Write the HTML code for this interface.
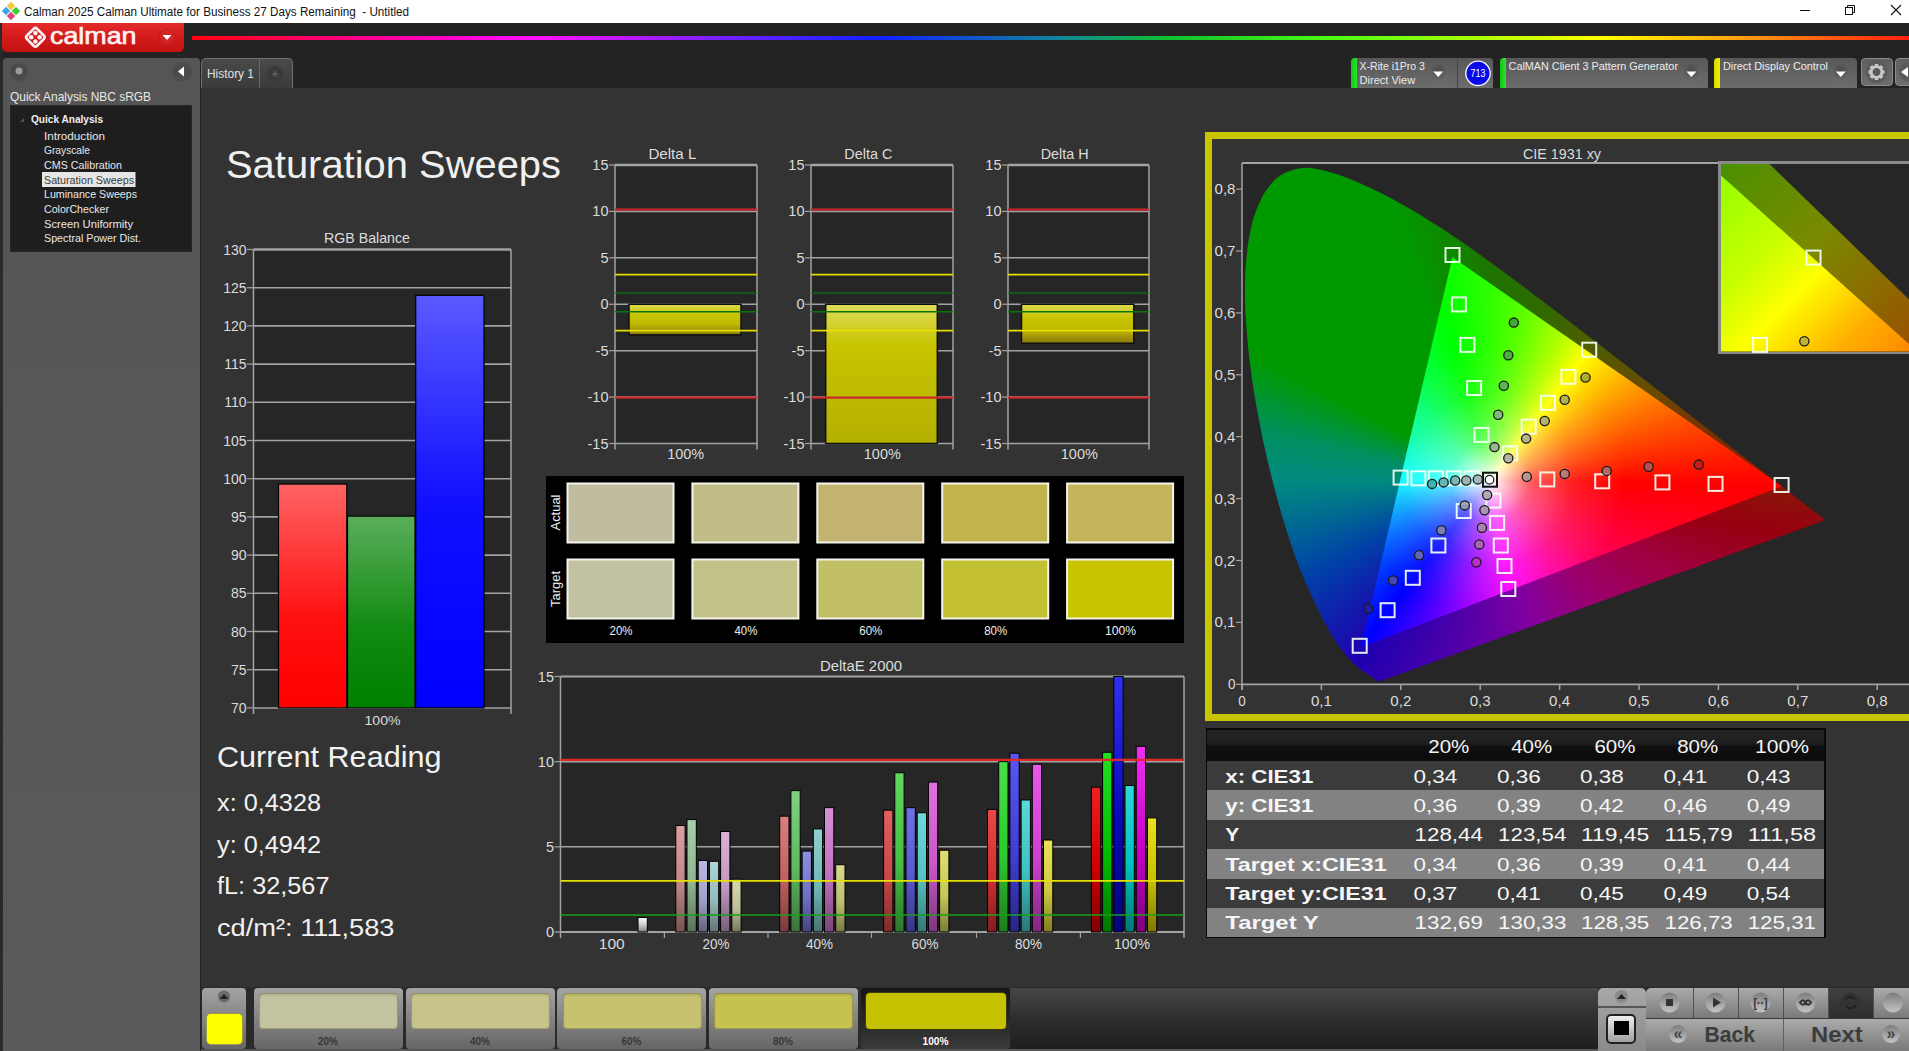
<!DOCTYPE html>
<html><head><meta charset="utf-8"><title>Calman</title>
<style>
html,body{margin:0;padding:0;width:1909px;height:1051px;overflow:hidden;background:#232323;font-family:"Liberation Sans", sans-serif;}
svg text{font-family:"Liberation Sans", sans-serif;}
</style></head><body>
<div style="position:absolute;left:0px;top:0px;width:1909px;height:23px;background:#ffffff;"></div><div style="position:absolute;left:0px;top:23px;width:3px;height:1028px;background:#2a2a2a;"></div><div style="position:absolute;left:2px;top:23px;width:182px;height:29px;background:linear-gradient(#e42b2b,#d01818 60%,#c41212);border-radius:0 0 5px 5px;"></div><div style="position:absolute;left:192px;top:36px;width:1717px;height:4px;background:linear-gradient(90deg,#ff0010 0%,#ff00c0 14%,#ff10ff 20%,#8020ff 30%,#1020ff 40%,#1080a0 50%,#10c030 57%,#50ff10 67%,#ffff00 82%,#ffa010 90%,#ff2010 100%);"></div><div style="position:absolute;left:3px;top:58px;width:197px;height:993px;background:linear-gradient(#555555,#5a5a5a);border-radius:4px 4px 0 0;"></div><div style="position:absolute;left:10px;top:105px;width:182px;height:147px;background:#1e1e1e;box-shadow:inset 0 0 0 1px #262626;"></div><div style="position:absolute;left:201px;top:58px;width:92px;height:30px;background:linear-gradient(#4a4a4a,#3a3a3a);border:1px solid #707070;border-bottom:none;border-radius:5px 5px 0 0;box-sizing:border-box;"></div><div style="position:absolute;left:259px;top:58px;width:1px;height:30px;background:#6a6a6a;"></div><div style="position:absolute;left:201px;top:88px;width:1708px;height:899px;background:#333333;"></div><div style="position:absolute;left:201px;top:987px;width:1708px;height:64px;background:#2b2b2b;"></div><svg width="1909" height="1051" viewBox="0 0 1909 1051" style="position:absolute;left:0;top:0"><defs><linearGradient id="gff0000" x1="0" y1="0" x2="0" y2="1"><stop offset="0" stop-color="#ff6464"/><stop offset="0.6" stop-color="#ff1010"/><stop offset="1" stop-color="#ff0000"/></linearGradient><linearGradient id="g008000" x1="0" y1="0" x2="0" y2="1"><stop offset="0" stop-color="#5aae5a"/><stop offset="0.6" stop-color="#108a10"/><stop offset="1" stop-color="#008000"/></linearGradient><linearGradient id="g0000ff" x1="0" y1="0" x2="0" y2="1"><stop offset="0" stop-color="#5a5aff"/><stop offset="0.5" stop-color="#1010ff"/><stop offset="1" stop-color="#0000ff"/></linearGradient><linearGradient id="gyel" x1="0" y1="0" x2="0" y2="1"><stop offset="0" stop-color="#dada50"/><stop offset="0.35" stop-color="#c8c400"/><stop offset="0.65" stop-color="#c0b800"/><stop offset="1" stop-color="#8a7810"/></linearGradient><linearGradient id="gyel2" x1="0" y1="0" x2="0" y2="1"><stop offset="0" stop-color="#dcdc5a"/><stop offset="0.3" stop-color="#c8c400"/><stop offset="1" stop-color="#b4b000"/></linearGradient><linearGradient id="eb1" x1="0" y1="0" x2="0" y2="1"><stop offset="0" stop-color="#ffffff"/><stop offset="0.55" stop-color="#c8c8c8"/><stop offset="1" stop-color="#7c7c7c"/></linearGradient><linearGradient id="eb2" x1="0" y1="0" x2="0" y2="1"><stop offset="0" stop-color="#d8a0a0"/><stop offset="0.55" stop-color="#c08888"/><stop offset="1" stop-color="#775454"/></linearGradient><linearGradient id="eb3" x1="0" y1="0" x2="0" y2="1"><stop offset="0" stop-color="#a8d0a8"/><stop offset="0.55" stop-color="#90b890"/><stop offset="1" stop-color="#597259"/></linearGradient><linearGradient id="eb4" x1="0" y1="0" x2="0" y2="1"><stop offset="0" stop-color="#b8b8e0"/><stop offset="0.55" stop-color="#a0a0c8"/><stop offset="1" stop-color="#63637c"/></linearGradient><linearGradient id="eb5" x1="0" y1="0" x2="0" y2="1"><stop offset="0" stop-color="#b0d4d4"/><stop offset="0.55" stop-color="#98bcbc"/><stop offset="1" stop-color="#5e7474"/></linearGradient><linearGradient id="eb6" x1="0" y1="0" x2="0" y2="1"><stop offset="0" stop-color="#d8b0d8"/><stop offset="0.55" stop-color="#c098c0"/><stop offset="1" stop-color="#775e77"/></linearGradient><linearGradient id="eb7" x1="0" y1="0" x2="0" y2="1"><stop offset="0" stop-color="#d8d8b0"/><stop offset="0.55" stop-color="#c0c098"/><stop offset="1" stop-color="#77775e"/></linearGradient><linearGradient id="eb8" x1="0" y1="0" x2="0" y2="1"><stop offset="0" stop-color="#d88080"/><stop offset="0.55" stop-color="#c06060"/><stop offset="1" stop-color="#773b3b"/></linearGradient><linearGradient id="eb9" x1="0" y1="0" x2="0" y2="1"><stop offset="0" stop-color="#80d080"/><stop offset="0.55" stop-color="#60b860"/><stop offset="1" stop-color="#3b723b"/></linearGradient><linearGradient id="eb10" x1="0" y1="0" x2="0" y2="1"><stop offset="0" stop-color="#9090e0"/><stop offset="0.55" stop-color="#7070c8"/><stop offset="1" stop-color="#45457c"/></linearGradient><linearGradient id="eb11" x1="0" y1="0" x2="0" y2="1"><stop offset="0" stop-color="#90d0d0"/><stop offset="0.55" stop-color="#70b8b8"/><stop offset="1" stop-color="#457272"/></linearGradient><linearGradient id="eb12" x1="0" y1="0" x2="0" y2="1"><stop offset="0" stop-color="#d890d8"/><stop offset="0.55" stop-color="#c070c0"/><stop offset="1" stop-color="#774577"/></linearGradient><linearGradient id="eb13" x1="0" y1="0" x2="0" y2="1"><stop offset="0" stop-color="#d8d890"/><stop offset="0.55" stop-color="#c0c070"/><stop offset="1" stop-color="#777745"/></linearGradient><linearGradient id="eb14" x1="0" y1="0" x2="0" y2="1"><stop offset="0" stop-color="#e06060"/><stop offset="0.55" stop-color="#c84848"/><stop offset="1" stop-color="#7c2c2c"/></linearGradient><linearGradient id="eb15" x1="0" y1="0" x2="0" y2="1"><stop offset="0" stop-color="#60d860"/><stop offset="0.55" stop-color="#48c048"/><stop offset="1" stop-color="#2c772c"/></linearGradient><linearGradient id="eb16" x1="0" y1="0" x2="0" y2="1"><stop offset="0" stop-color="#7070e8"/><stop offset="0.55" stop-color="#5858d0"/><stop offset="1" stop-color="#363680"/></linearGradient><linearGradient id="eb17" x1="0" y1="0" x2="0" y2="1"><stop offset="0" stop-color="#70d8d8"/><stop offset="0.55" stop-color="#58c0c0"/><stop offset="1" stop-color="#367777"/></linearGradient><linearGradient id="eb18" x1="0" y1="0" x2="0" y2="1"><stop offset="0" stop-color="#e070e0"/><stop offset="0.55" stop-color="#c858c8"/><stop offset="1" stop-color="#7c367c"/></linearGradient><linearGradient id="eb19" x1="0" y1="0" x2="0" y2="1"><stop offset="0" stop-color="#e0e070"/><stop offset="0.55" stop-color="#c8c858"/><stop offset="1" stop-color="#7c7c36"/></linearGradient><linearGradient id="eb20" x1="0" y1="0" x2="0" y2="1"><stop offset="0" stop-color="#e84848"/><stop offset="0.55" stop-color="#d03030"/><stop offset="1" stop-color="#801d1d"/></linearGradient><linearGradient id="eb21" x1="0" y1="0" x2="0" y2="1"><stop offset="0" stop-color="#48e048"/><stop offset="0.55" stop-color="#30c830"/><stop offset="1" stop-color="#1d7c1d"/></linearGradient><linearGradient id="eb22" x1="0" y1="0" x2="0" y2="1"><stop offset="0" stop-color="#5858f0"/><stop offset="0.55" stop-color="#4040d8"/><stop offset="1" stop-color="#272785"/></linearGradient><linearGradient id="eb23" x1="0" y1="0" x2="0" y2="1"><stop offset="0" stop-color="#58d8d8"/><stop offset="0.55" stop-color="#40c0c0"/><stop offset="1" stop-color="#277777"/></linearGradient><linearGradient id="eb24" x1="0" y1="0" x2="0" y2="1"><stop offset="0" stop-color="#e858e8"/><stop offset="0.55" stop-color="#d040d0"/><stop offset="1" stop-color="#802780"/></linearGradient><linearGradient id="eb25" x1="0" y1="0" x2="0" y2="1"><stop offset="0" stop-color="#e8e058"/><stop offset="0.55" stop-color="#d0c840"/><stop offset="1" stop-color="#807c27"/></linearGradient><linearGradient id="eb26" x1="0" y1="0" x2="0" y2="1"><stop offset="0" stop-color="#f02020"/><stop offset="0.55" stop-color="#d00000"/><stop offset="1" stop-color="#800000"/></linearGradient><linearGradient id="eb27" x1="0" y1="0" x2="0" y2="1"><stop offset="0" stop-color="#20e020"/><stop offset="0.55" stop-color="#00c000"/><stop offset="1" stop-color="#007700"/></linearGradient><linearGradient id="eb28" x1="0" y1="0" x2="0" y2="1"><stop offset="0" stop-color="#3030f0"/><stop offset="0.55" stop-color="#0808c0"/><stop offset="1" stop-color="#040477"/></linearGradient><linearGradient id="eb29" x1="0" y1="0" x2="0" y2="1"><stop offset="0" stop-color="#30d8d8"/><stop offset="0.55" stop-color="#00c0c0"/><stop offset="1" stop-color="#007777"/></linearGradient><linearGradient id="eb30" x1="0" y1="0" x2="0" y2="1"><stop offset="0" stop-color="#f030f0"/><stop offset="0.55" stop-color="#c800c8"/><stop offset="1" stop-color="#7c007c"/></linearGradient><linearGradient id="eb31" x1="0" y1="0" x2="0" y2="1"><stop offset="0" stop-color="#e8e020"/><stop offset="0.55" stop-color="#c8c000"/><stop offset="1" stop-color="#7c7700"/></linearGradient><radialGradient id="dd" cx="0.5" cy="0.3" r="0.6"><stop offset="0" stop-color="#4c4c4c"/><stop offset="1" stop-color="#6a6a6a"/></radialGradient><linearGradient id="nbc" x1="0" y1="0" x2="0" y2="1"><stop offset="0" stop-color="#7c7c7c"/><stop offset="1" stop-color="#c4c4c4"/></linearGradient></defs><g transform="translate(11,11) rotate(45)"><rect x="-6.5" y="-6.5" width="6" height="6" fill="#f5c93a"/><rect x="0.5" y="-6.5" width="6" height="6" fill="#3ccf3c"/><rect x="0.5" y="0.5" width="6" height="6" fill="#e8407a"/><rect x="-6.5" y="0.5" width="6" height="6" fill="#3aa8e8"/></g><text x="24" y="16" font-size="12" fill="#111" text-anchor="start" textLength="385" lengthAdjust="spacingAndGlyphs" xml:space="preserve">Calman 2025 Calman Ultimate for Business 27 Days Remaining  - Untitled</text><line x1="1800" y1="10.5" x2="1810" y2="10.5" stroke="#111" stroke-width="1"/><rect x="1845.5" y="7.5" width="7" height="7" fill="none" stroke="#111"/><path d="M1847.5 7.5V5.5h7v7h-2" fill="none" stroke="#111"/><path d="M1891 5L1901 15M1901 5L1891 15" stroke="#111" stroke-width="1.1"/><g transform="translate(35.4,37.3) rotate(45)" fill="none" stroke="#fff4f4" stroke-width="2.6"><rect x="-7.2" y="-7.2" width="14.4" height="14.4" rx="2.5"/></g><g fill="#fff4f4"><circle cx="35.4" cy="33.1" r="2.3"/><circle cx="31.2" cy="37.3" r="2.3"/><circle cx="39.6" cy="37.3" r="2.3"/><circle cx="35.4" cy="41.5" r="2.3"/></g><text x="50" y="44" font-size="24.5" fill="#fff0f0" text-anchor="start" textLength="86.5" lengthAdjust="spacingAndGlyphs" stroke="#fff0f0" stroke-width="0.7">calman</text><circle cx="167" cy="37.5" r="9" fill="#c81c1c"/><circle cx="167" cy="36.5" r="7" fill="#d42424"/><path d="M162.5 35h9l-4.5 5z" fill="#fff"/><circle cx="19" cy="72" r="9" fill="#4a4a4a"/><circle cx="19" cy="71" r="3.5" fill="#9a9a9a"/><circle cx="182" cy="72" r="10" fill="#4c4c4c"/><path d="M178 71.5l6-5v10z" fill="#fff"/><text x="10" y="101" font-size="13" fill="#e8e8e8" text-anchor="start" textLength="141" lengthAdjust="spacingAndGlyphs">Quick Analysis NBC sRGB</text><path d="M20 122l4-4v4z" fill="#555"/><text x="31" y="123" font-size="11" fill="#f0f0f0" text-anchor="start" font-weight="bold" textLength="72" lengthAdjust="spacingAndGlyphs">Quick Analysis</text><text x="44" y="139.5" font-size="11" fill="#e8e8e8" text-anchor="start" textLength="61" lengthAdjust="spacingAndGlyphs">Introduction</text><text x="44" y="154.2" font-size="11" fill="#e8e8e8" text-anchor="start" textLength="46" lengthAdjust="spacingAndGlyphs">Grayscale</text><text x="44" y="168.9" font-size="11" fill="#e8e8e8" text-anchor="start" textLength="78" lengthAdjust="spacingAndGlyphs">CMS Calibration</text><rect x="42" y="172" width="93.5" height="15" fill="#e6e6e6"/><text x="44" y="183.6" font-size="11" fill="#3a3a3a" text-anchor="start" textLength="90" lengthAdjust="spacingAndGlyphs">Saturation Sweeps</text><text x="44" y="198.3" font-size="11" fill="#e8e8e8" text-anchor="start" textLength="93" lengthAdjust="spacingAndGlyphs">Luminance Sweeps</text><text x="44" y="213.0" font-size="11" fill="#e8e8e8" text-anchor="start" textLength="65" lengthAdjust="spacingAndGlyphs">ColorChecker</text><text x="44" y="227.7" font-size="11" fill="#e8e8e8" text-anchor="start" textLength="89" lengthAdjust="spacingAndGlyphs">Screen Uniformity</text><text x="44" y="242.39999999999998" font-size="11" fill="#e8e8e8" text-anchor="start" textLength="97" lengthAdjust="spacingAndGlyphs">Spectral Power Dist.</text><text x="207" y="78" font-size="12" fill="#e0e0e0" text-anchor="start" textLength="47" lengthAdjust="spacingAndGlyphs">History 1</text><circle cx="275" cy="74" r="8" fill="#3a3a3a"/><path d="M275 71v6M272 74h6" stroke="#6a6a6a" stroke-width="1"/><text x="226" y="177.7" font-size="38" fill="#f0f0f0" text-anchor="start" textLength="335" lengthAdjust="spacingAndGlyphs">Saturation Sweeps</text><rect x="253.5" y="249.5" width="257.5" height="458.4" fill="#262626"/><line x1="247" y1="249.5" x2="253.5" y2="249.5" stroke="#a3a3a3" stroke-width="1.2"/><text x="246.5" y="254.5" font-size="14" fill="#dcdcdc" text-anchor="end">130</text><line x1="253.5" y1="287.7" x2="511" y2="287.7" stroke="#a3a3a3" stroke-width="1.6"/><line x1="247" y1="287.7" x2="253.5" y2="287.7" stroke="#a3a3a3" stroke-width="1.2"/><text x="246.5" y="292.7" font-size="14" fill="#dcdcdc" text-anchor="end">125</text><line x1="253.5" y1="325.9" x2="511" y2="325.9" stroke="#a3a3a3" stroke-width="1.6"/><line x1="247" y1="325.9" x2="253.5" y2="325.9" stroke="#a3a3a3" stroke-width="1.2"/><text x="246.5" y="330.9" font-size="14" fill="#dcdcdc" text-anchor="end">120</text><line x1="253.5" y1="364.1" x2="511" y2="364.1" stroke="#a3a3a3" stroke-width="1.6"/><line x1="247" y1="364.1" x2="253.5" y2="364.1" stroke="#a3a3a3" stroke-width="1.2"/><text x="246.5" y="369.1" font-size="14" fill="#dcdcdc" text-anchor="end">115</text><line x1="253.5" y1="402.29999999999995" x2="511" y2="402.29999999999995" stroke="#a3a3a3" stroke-width="1.6"/><line x1="247" y1="402.29999999999995" x2="253.5" y2="402.29999999999995" stroke="#a3a3a3" stroke-width="1.2"/><text x="246.5" y="407.29999999999995" font-size="14" fill="#dcdcdc" text-anchor="end">110</text><line x1="253.5" y1="440.5" x2="511" y2="440.5" stroke="#a3a3a3" stroke-width="1.6"/><line x1="247" y1="440.5" x2="253.5" y2="440.5" stroke="#a3a3a3" stroke-width="1.2"/><text x="246.5" y="445.5" font-size="14" fill="#dcdcdc" text-anchor="end">105</text><line x1="253.5" y1="478.7" x2="511" y2="478.7" stroke="#a3a3a3" stroke-width="1.6"/><line x1="247" y1="478.7" x2="253.5" y2="478.7" stroke="#a3a3a3" stroke-width="1.2"/><text x="246.5" y="483.7" font-size="14" fill="#dcdcdc" text-anchor="end">100</text><line x1="253.5" y1="516.9" x2="511" y2="516.9" stroke="#a3a3a3" stroke-width="1.6"/><line x1="247" y1="516.9" x2="253.5" y2="516.9" stroke="#a3a3a3" stroke-width="1.2"/><text x="246.5" y="521.9" font-size="14" fill="#dcdcdc" text-anchor="end">95</text><line x1="253.5" y1="555.0999999999999" x2="511" y2="555.0999999999999" stroke="#a3a3a3" stroke-width="1.6"/><line x1="247" y1="555.0999999999999" x2="253.5" y2="555.0999999999999" stroke="#a3a3a3" stroke-width="1.2"/><text x="246.5" y="560.0999999999999" font-size="14" fill="#dcdcdc" text-anchor="end">90</text><line x1="253.5" y1="593.3" x2="511" y2="593.3" stroke="#a3a3a3" stroke-width="1.6"/><line x1="247" y1="593.3" x2="253.5" y2="593.3" stroke="#a3a3a3" stroke-width="1.2"/><text x="246.5" y="598.3" font-size="14" fill="#dcdcdc" text-anchor="end">85</text><line x1="253.5" y1="631.5" x2="511" y2="631.5" stroke="#a3a3a3" stroke-width="1.6"/><line x1="247" y1="631.5" x2="253.5" y2="631.5" stroke="#a3a3a3" stroke-width="1.2"/><text x="246.5" y="636.5" font-size="14" fill="#dcdcdc" text-anchor="end">80</text><line x1="253.5" y1="669.6999999999999" x2="511" y2="669.6999999999999" stroke="#a3a3a3" stroke-width="1.6"/><line x1="247" y1="669.6999999999999" x2="253.5" y2="669.6999999999999" stroke="#a3a3a3" stroke-width="1.2"/><text x="246.5" y="674.6999999999999" font-size="14" fill="#dcdcdc" text-anchor="end">75</text><line x1="247" y1="707.9" x2="253.5" y2="707.9" stroke="#a3a3a3" stroke-width="1.2"/><text x="246.5" y="712.9" font-size="14" fill="#dcdcdc" text-anchor="end">70</text><line x1="253.5" y1="249.5" x2="511" y2="249.5" stroke="#a3a3a3" stroke-width="2.5"/><line x1="253.5" y1="249.5" x2="253.5" y2="714" stroke="#a3a3a3" stroke-width="1.5"/><line x1="511" y1="249.5" x2="511" y2="714" stroke="#a3a3a3" stroke-width="1.5"/><line x1="253.5" y1="707.9" x2="511" y2="707.9" stroke="#a3a3a3" stroke-width="1.5"/><text x="367" y="243" font-size="14" fill="#dcdcdc" text-anchor="middle" textLength="86" lengthAdjust="spacingAndGlyphs">RGB Balance</text><text x="382.5" y="725" font-size="13.5" fill="#dcdcdc" text-anchor="middle" textLength="36" lengthAdjust="spacingAndGlyphs">100%</text><rect x="278.5" y="484.048" width="68.30000000000001" height="223.85199999999998" fill="url(#gff0000)" stroke="#000" stroke-width="1.2"/><rect x="347.5" y="516.136" width="67.5" height="191.764" fill="url(#g008000)" stroke="#000" stroke-width="1.2"/><rect x="415.7" y="295.34" width="68.30000000000001" height="412.56" fill="url(#g0000ff)" stroke="#000" stroke-width="1.2"/><text x="217" y="767.3" font-size="28.6" fill="#f2f2f2" text-anchor="start" textLength="224.5" lengthAdjust="spacingAndGlyphs">Current Reading</text><text x="217" y="810.6" font-size="23.3" fill="#f2f2f2" text-anchor="start" textLength="104" lengthAdjust="spacingAndGlyphs">x: 0,4328</text><text x="217" y="852.5" font-size="23.3" fill="#f2f2f2" text-anchor="start" textLength="104" lengthAdjust="spacingAndGlyphs">y: 0,4942</text><text x="217" y="894.4" font-size="23.3" fill="#f2f2f2" text-anchor="start" textLength="112.5" lengthAdjust="spacingAndGlyphs">fL: 32,567</text><text x="217" y="936.2" font-size="23.3" fill="#f2f2f2" text-anchor="start" textLength="177.5" lengthAdjust="spacingAndGlyphs">cd/m²: 111,583</text><rect x="615" y="165" width="142" height="278.5" fill="#262626"/><line x1="609" y1="165.0" x2="615" y2="165.0" stroke="#a3a3a3" stroke-width="1.2"/><text x="608.5" y="170.0" font-size="14.5" fill="#dcdcdc" text-anchor="end">15</text><line x1="615" y1="211.41666666666666" x2="757" y2="211.41666666666666" stroke="#a3a3a3" stroke-width="1.5"/><line x1="609" y1="211.41666666666666" x2="615" y2="211.41666666666666" stroke="#a3a3a3" stroke-width="1.2"/><text x="608.5" y="216.41666666666666" font-size="14.5" fill="#dcdcdc" text-anchor="end">10</text><line x1="615" y1="257.8333333333333" x2="757" y2="257.8333333333333" stroke="#a3a3a3" stroke-width="1.5"/><line x1="609" y1="257.8333333333333" x2="615" y2="257.8333333333333" stroke="#a3a3a3" stroke-width="1.2"/><text x="608.5" y="262.8333333333333" font-size="14.5" fill="#dcdcdc" text-anchor="end">5</text><line x1="615" y1="304.25" x2="757" y2="304.25" stroke="#a3a3a3" stroke-width="1.5"/><line x1="609" y1="304.25" x2="615" y2="304.25" stroke="#a3a3a3" stroke-width="1.2"/><text x="608.5" y="309.25" font-size="14.5" fill="#dcdcdc" text-anchor="end">0</text><line x1="615" y1="350.66666666666663" x2="757" y2="350.66666666666663" stroke="#a3a3a3" stroke-width="1.5"/><line x1="609" y1="350.66666666666663" x2="615" y2="350.66666666666663" stroke="#a3a3a3" stroke-width="1.2"/><text x="608.5" y="355.66666666666663" font-size="14.5" fill="#dcdcdc" text-anchor="end">-5</text><line x1="615" y1="397.0833333333333" x2="757" y2="397.0833333333333" stroke="#a3a3a3" stroke-width="1.5"/><line x1="609" y1="397.0833333333333" x2="615" y2="397.0833333333333" stroke="#a3a3a3" stroke-width="1.2"/><text x="608.5" y="402.0833333333333" font-size="14.5" fill="#dcdcdc" text-anchor="end">-10</text><line x1="609" y1="443.5" x2="615" y2="443.5" stroke="#a3a3a3" stroke-width="1.2"/><text x="608.5" y="448.5" font-size="14.5" fill="#dcdcdc" text-anchor="end">-15</text><line x1="615" y1="165" x2="757" y2="165" stroke="#a3a3a3" stroke-width="2.5"/><line x1="615" y1="165" x2="615" y2="449.5" stroke="#a3a3a3" stroke-width="1.5"/><line x1="757" y1="165" x2="757" y2="449.5" stroke="#a3a3a3" stroke-width="1.5"/><line x1="615" y1="443.5" x2="757" y2="443.5" stroke="#a3a3a3" stroke-width="1.5"/><text x="672.4" y="159" font-size="14.5" fill="#dcdcdc" text-anchor="middle" textLength="48" lengthAdjust="spacingAndGlyphs">Delta L</text><text x="685.7" y="458.5" font-size="14" fill="#dcdcdc" text-anchor="middle" textLength="37" lengthAdjust="spacingAndGlyphs">100%</text><rect x="629" y="304.25" width="112" height="30.63499999999999" fill="url(#gyel)" stroke="#101010" stroke-width="1.5"/><line x1="615" y1="209.56" x2="757" y2="209.56" stroke="#c82828" stroke-width="2.2"/><line x1="615" y1="397.5475" x2="757" y2="397.5475" stroke="#c82828" stroke-width="2.2"/><line x1="615" y1="274.54333333333335" x2="757" y2="274.54333333333335" stroke="#e6e000" stroke-width="1.7"/><line x1="615" y1="330.7075" x2="757" y2="330.7075" stroke="#e6e000" stroke-width="1.7"/><line x1="615" y1="293.11" x2="757" y2="293.11" stroke="#0c740c" stroke-width="1.4"/><line x1="615" y1="311.6766666666667" x2="757" y2="311.6766666666667" stroke="#0c740c" stroke-width="1.4"/><rect x="811" y="165" width="142" height="278.5" fill="#262626"/><line x1="805" y1="165.0" x2="811" y2="165.0" stroke="#a3a3a3" stroke-width="1.2"/><text x="804.5" y="170.0" font-size="14.5" fill="#dcdcdc" text-anchor="end">15</text><line x1="811" y1="211.41666666666666" x2="953" y2="211.41666666666666" stroke="#a3a3a3" stroke-width="1.5"/><line x1="805" y1="211.41666666666666" x2="811" y2="211.41666666666666" stroke="#a3a3a3" stroke-width="1.2"/><text x="804.5" y="216.41666666666666" font-size="14.5" fill="#dcdcdc" text-anchor="end">10</text><line x1="811" y1="257.8333333333333" x2="953" y2="257.8333333333333" stroke="#a3a3a3" stroke-width="1.5"/><line x1="805" y1="257.8333333333333" x2="811" y2="257.8333333333333" stroke="#a3a3a3" stroke-width="1.2"/><text x="804.5" y="262.8333333333333" font-size="14.5" fill="#dcdcdc" text-anchor="end">5</text><line x1="811" y1="304.25" x2="953" y2="304.25" stroke="#a3a3a3" stroke-width="1.5"/><line x1="805" y1="304.25" x2="811" y2="304.25" stroke="#a3a3a3" stroke-width="1.2"/><text x="804.5" y="309.25" font-size="14.5" fill="#dcdcdc" text-anchor="end">0</text><line x1="811" y1="350.66666666666663" x2="953" y2="350.66666666666663" stroke="#a3a3a3" stroke-width="1.5"/><line x1="805" y1="350.66666666666663" x2="811" y2="350.66666666666663" stroke="#a3a3a3" stroke-width="1.2"/><text x="804.5" y="355.66666666666663" font-size="14.5" fill="#dcdcdc" text-anchor="end">-5</text><line x1="811" y1="397.0833333333333" x2="953" y2="397.0833333333333" stroke="#a3a3a3" stroke-width="1.5"/><line x1="805" y1="397.0833333333333" x2="811" y2="397.0833333333333" stroke="#a3a3a3" stroke-width="1.2"/><text x="804.5" y="402.0833333333333" font-size="14.5" fill="#dcdcdc" text-anchor="end">-10</text><line x1="805" y1="443.5" x2="811" y2="443.5" stroke="#a3a3a3" stroke-width="1.2"/><text x="804.5" y="448.5" font-size="14.5" fill="#dcdcdc" text-anchor="end">-15</text><line x1="811" y1="165" x2="953" y2="165" stroke="#a3a3a3" stroke-width="2.5"/><line x1="811" y1="165" x2="811" y2="449.5" stroke="#a3a3a3" stroke-width="1.5"/><line x1="953" y1="165" x2="953" y2="449.5" stroke="#a3a3a3" stroke-width="1.5"/><line x1="811" y1="443.5" x2="953" y2="443.5" stroke="#a3a3a3" stroke-width="1.5"/><text x="868.3" y="159" font-size="14.5" fill="#dcdcdc" text-anchor="middle" textLength="48" lengthAdjust="spacingAndGlyphs">Delta C</text><text x="882.3" y="458.5" font-size="14" fill="#dcdcdc" text-anchor="middle" textLength="37" lengthAdjust="spacingAndGlyphs">100%</text><rect x="825.7" y="304.25" width="111.59999999999991" height="139.25" fill="url(#gyel2)" stroke="#101010" stroke-width="1.5"/><line x1="811" y1="209.56" x2="953" y2="209.56" stroke="#c82828" stroke-width="2.2"/><line x1="811" y1="397.5475" x2="953" y2="397.5475" stroke="#c82828" stroke-width="2.2"/><line x1="811" y1="274.54333333333335" x2="953" y2="274.54333333333335" stroke="#e6e000" stroke-width="1.7"/><line x1="811" y1="330.7075" x2="953" y2="330.7075" stroke="#e6e000" stroke-width="1.7"/><line x1="811" y1="293.11" x2="953" y2="293.11" stroke="#0c740c" stroke-width="1.4"/><line x1="811" y1="311.6766666666667" x2="953" y2="311.6766666666667" stroke="#0c740c" stroke-width="1.4"/><rect x="1008" y="165" width="141" height="278.5" fill="#262626"/><line x1="1002" y1="165.0" x2="1008" y2="165.0" stroke="#a3a3a3" stroke-width="1.2"/><text x="1001.5" y="170.0" font-size="14.5" fill="#dcdcdc" text-anchor="end">15</text><line x1="1008" y1="211.41666666666666" x2="1149" y2="211.41666666666666" stroke="#a3a3a3" stroke-width="1.5"/><line x1="1002" y1="211.41666666666666" x2="1008" y2="211.41666666666666" stroke="#a3a3a3" stroke-width="1.2"/><text x="1001.5" y="216.41666666666666" font-size="14.5" fill="#dcdcdc" text-anchor="end">10</text><line x1="1008" y1="257.8333333333333" x2="1149" y2="257.8333333333333" stroke="#a3a3a3" stroke-width="1.5"/><line x1="1002" y1="257.8333333333333" x2="1008" y2="257.8333333333333" stroke="#a3a3a3" stroke-width="1.2"/><text x="1001.5" y="262.8333333333333" font-size="14.5" fill="#dcdcdc" text-anchor="end">5</text><line x1="1008" y1="304.25" x2="1149" y2="304.25" stroke="#a3a3a3" stroke-width="1.5"/><line x1="1002" y1="304.25" x2="1008" y2="304.25" stroke="#a3a3a3" stroke-width="1.2"/><text x="1001.5" y="309.25" font-size="14.5" fill="#dcdcdc" text-anchor="end">0</text><line x1="1008" y1="350.66666666666663" x2="1149" y2="350.66666666666663" stroke="#a3a3a3" stroke-width="1.5"/><line x1="1002" y1="350.66666666666663" x2="1008" y2="350.66666666666663" stroke="#a3a3a3" stroke-width="1.2"/><text x="1001.5" y="355.66666666666663" font-size="14.5" fill="#dcdcdc" text-anchor="end">-5</text><line x1="1008" y1="397.0833333333333" x2="1149" y2="397.0833333333333" stroke="#a3a3a3" stroke-width="1.5"/><line x1="1002" y1="397.0833333333333" x2="1008" y2="397.0833333333333" stroke="#a3a3a3" stroke-width="1.2"/><text x="1001.5" y="402.0833333333333" font-size="14.5" fill="#dcdcdc" text-anchor="end">-10</text><line x1="1002" y1="443.5" x2="1008" y2="443.5" stroke="#a3a3a3" stroke-width="1.2"/><text x="1001.5" y="448.5" font-size="14.5" fill="#dcdcdc" text-anchor="end">-15</text><line x1="1008" y1="165" x2="1149" y2="165" stroke="#a3a3a3" stroke-width="2.5"/><line x1="1008" y1="165" x2="1008" y2="449.5" stroke="#a3a3a3" stroke-width="1.5"/><line x1="1149" y1="165" x2="1149" y2="449.5" stroke="#a3a3a3" stroke-width="1.5"/><line x1="1008" y1="443.5" x2="1149" y2="443.5" stroke="#a3a3a3" stroke-width="1.5"/><text x="1064.7" y="159" font-size="14.5" fill="#dcdcdc" text-anchor="middle" textLength="48" lengthAdjust="spacingAndGlyphs">Delta H</text><text x="1079.3" y="458.5" font-size="14" fill="#dcdcdc" text-anchor="middle" textLength="37" lengthAdjust="spacingAndGlyphs">100%</text><rect x="1021.5" y="304.25" width="112.29999999999995" height="38.99000000000001" fill="url(#gyel)" stroke="#101010" stroke-width="1.5"/><line x1="1008" y1="209.56" x2="1149" y2="209.56" stroke="#c82828" stroke-width="2.2"/><line x1="1008" y1="397.5475" x2="1149" y2="397.5475" stroke="#c82828" stroke-width="2.2"/><line x1="1008" y1="274.54333333333335" x2="1149" y2="274.54333333333335" stroke="#e6e000" stroke-width="1.7"/><line x1="1008" y1="330.7075" x2="1149" y2="330.7075" stroke="#e6e000" stroke-width="1.7"/><line x1="1008" y1="293.11" x2="1149" y2="293.11" stroke="#0c740c" stroke-width="1.4"/><line x1="1008" y1="311.6766666666667" x2="1149" y2="311.6766666666667" stroke="#0c740c" stroke-width="1.4"/><rect x="546" y="476" width="638" height="167" fill="#000000"/><rect x="567.5" y="483.5" width="106" height="59" fill="#c0bca0" stroke="#f4f4ec" stroke-width="2"/><rect x="567.5" y="559.5" width="106" height="59" fill="#c2c2a2" stroke="#f4f4ec" stroke-width="2"/><text x="621.0" y="635" font-size="13.5" fill="#f0f0f0" text-anchor="middle" textLength="23" lengthAdjust="spacingAndGlyphs">20%</text><rect x="692.4" y="483.5" width="106" height="59" fill="#c2bc88" stroke="#f4f4ec" stroke-width="2"/><rect x="692.4" y="559.5" width="106" height="59" fill="#c2c288" stroke="#f4f4ec" stroke-width="2"/><text x="745.9" y="635" font-size="13.5" fill="#f0f0f0" text-anchor="middle" textLength="23" lengthAdjust="spacingAndGlyphs">40%</text><rect x="817.3" y="483.5" width="106" height="59" fill="#c2b470" stroke="#f4f4ec" stroke-width="2"/><rect x="817.3" y="559.5" width="106" height="59" fill="#c2c064" stroke="#f4f4ec" stroke-width="2"/><text x="870.8" y="635" font-size="13.5" fill="#f0f0f0" text-anchor="middle" textLength="23" lengthAdjust="spacingAndGlyphs">60%</text><rect x="942.2" y="483.5" width="106" height="59" fill="#c2b44c" stroke="#f4f4ec" stroke-width="2"/><rect x="942.2" y="559.5" width="106" height="59" fill="#c2c030" stroke="#f4f4ec" stroke-width="2"/><text x="995.7" y="635" font-size="13.5" fill="#f0f0f0" text-anchor="middle" textLength="23" lengthAdjust="spacingAndGlyphs">80%</text><rect x="1067.1" y="483.5" width="106" height="59" fill="#c4b45a" stroke="#f4f4ec" stroke-width="2"/><rect x="1067.1" y="559.5" width="106" height="59" fill="#c8c400" stroke="#f4f4ec" stroke-width="2"/><text x="1120.6" y="635" font-size="13.5" fill="#f0f0f0" text-anchor="middle" textLength="31" lengthAdjust="spacingAndGlyphs">100%</text><text transform="translate(560,512.5) rotate(-90)" font-size="13.5" fill="#f0f0f0" text-anchor="middle" textLength="36" lengthAdjust="spacingAndGlyphs">Actual</text><text transform="translate(560,589) rotate(-90)" font-size="13.5" fill="#f0f0f0" text-anchor="middle" textLength="36" lengthAdjust="spacingAndGlyphs">Target</text><rect x="560.5" y="676.5" width="623.5" height="255.5" fill="#262626"/><line x1="560.5" y1="846.8333333333334" x2="1184" y2="846.8333333333334" stroke="#a3a3a3" stroke-width="1.5"/><line x1="560.5" y1="761.6666666666667" x2="1184" y2="761.6666666666667" stroke="#a3a3a3" stroke-width="1.5"/><line x1="554.5" y1="932.0" x2="560.5" y2="932.0" stroke="#a3a3a3" stroke-width="1.2"/><text x="554.0" y="937.0" font-size="14.5" fill="#dcdcdc" text-anchor="end">0</text><line x1="554.5" y1="846.8333333333334" x2="560.5" y2="846.8333333333334" stroke="#a3a3a3" stroke-width="1.2"/><text x="554.0" y="851.8333333333334" font-size="14.5" fill="#dcdcdc" text-anchor="end">5</text><line x1="554.5" y1="761.6666666666667" x2="560.5" y2="761.6666666666667" stroke="#a3a3a3" stroke-width="1.2"/><text x="554.0" y="766.6666666666667" font-size="14.5" fill="#dcdcdc" text-anchor="end">10</text><line x1="554.5" y1="676.5" x2="560.5" y2="676.5" stroke="#a3a3a3" stroke-width="1.2"/><text x="554.0" y="681.5" font-size="14.5" fill="#dcdcdc" text-anchor="end">15</text><line x1="560.5" y1="676.5" x2="1184" y2="676.5" stroke="#a3a3a3" stroke-width="2.2"/><line x1="560.5" y1="676.5" x2="560.5" y2="938" stroke="#a3a3a3" stroke-width="1.5"/><line x1="1184" y1="676.5" x2="1184" y2="938" stroke="#a3a3a3" stroke-width="1.5"/><line x1="560.5" y1="932" x2="1184" y2="932" stroke="#a3a3a3" stroke-width="1.8"/><line x1="664.4" y1="932" x2="664.4" y2="938" stroke="#a3a3a3" stroke-width="1.2"/><line x1="768" y1="932" x2="768" y2="938" stroke="#a3a3a3" stroke-width="1.2"/><line x1="871.5" y1="932" x2="871.5" y2="938" stroke="#a3a3a3" stroke-width="1.2"/><line x1="976.5" y1="932" x2="976.5" y2="938" stroke="#a3a3a3" stroke-width="1.2"/><line x1="1080.4" y1="932" x2="1080.4" y2="938" stroke="#a3a3a3" stroke-width="1.2"/><text x="861" y="670.5" font-size="14.5" fill="#dcdcdc" text-anchor="middle" textLength="82" lengthAdjust="spacingAndGlyphs">DeltaE 2000</text><text x="611.8" y="949" font-size="14.5" fill="#dcdcdc" text-anchor="middle" textLength="26" lengthAdjust="spacingAndGlyphs">100</text><text x="716" y="949" font-size="14.5" fill="#dcdcdc" text-anchor="middle" textLength="27" lengthAdjust="spacingAndGlyphs">20%</text><text x="819.6" y="949" font-size="14.5" fill="#dcdcdc" text-anchor="middle" textLength="27" lengthAdjust="spacingAndGlyphs">40%</text><text x="924.9" y="949" font-size="14.5" fill="#dcdcdc" text-anchor="middle" textLength="27" lengthAdjust="spacingAndGlyphs">60%</text><text x="1028.4" y="949" font-size="14.5" fill="#dcdcdc" text-anchor="middle" textLength="27" lengthAdjust="spacingAndGlyphs">80%</text><text x="1132" y="949" font-size="14.5" fill="#dcdcdc" text-anchor="middle" textLength="36" lengthAdjust="spacingAndGlyphs">100%</text><rect x="638" y="917.5216666666666" width="9.3" height="14.478333333333353" fill="url(#eb1)" stroke="#000" stroke-width="1"/><rect x="675.8" y="825.5416666666666" width="9.3" height="106.45833333333337" fill="url(#eb2)" stroke="#000" stroke-width="1"/><rect x="687.0" y="819.58" width="9.3" height="112.41999999999996" fill="url(#eb3)" stroke="#000" stroke-width="1"/><rect x="698.1999999999999" y="860.46" width="9.3" height="71.53999999999996" fill="url(#eb4)" stroke="#000" stroke-width="1"/><rect x="709.4" y="861.3116666666667" width="9.3" height="70.68833333333328" fill="url(#eb5)" stroke="#000" stroke-width="1"/><rect x="720.5999999999999" y="831.5033333333333" width="9.3" height="100.49666666666667" fill="url(#eb6)" stroke="#000" stroke-width="1"/><rect x="731.8" y="879.1966666666667" width="9.3" height="52.803333333333285" fill="url(#eb7)" stroke="#000" stroke-width="1"/><rect x="779.6999999999999" y="816.1733333333334" width="9.3" height="115.8266666666666" fill="url(#eb8)" stroke="#000" stroke-width="1"/><rect x="790.9" y="790.6233333333333" width="9.3" height="141.37666666666667" fill="url(#eb9)" stroke="#000" stroke-width="1"/><rect x="802.0999999999999" y="851.0916666666667" width="9.3" height="80.9083333333333" fill="url(#eb10)" stroke="#000" stroke-width="1"/><rect x="813.3" y="828.9483333333334" width="9.3" height="103.05166666666662" fill="url(#eb11)" stroke="#000" stroke-width="1"/><rect x="824.4999999999999" y="807.6566666666666" width="9.3" height="124.34333333333336" fill="url(#eb12)" stroke="#000" stroke-width="1"/><rect x="835.6999999999999" y="864.7183333333334" width="9.3" height="67.28166666666664" fill="url(#eb13)" stroke="#000" stroke-width="1"/><rect x="883.5999999999999" y="810.2116666666667" width="9.3" height="121.7883333333333" fill="url(#eb14)" stroke="#000" stroke-width="1"/><rect x="894.8" y="772.7383333333333" width="9.3" height="159.26166666666666" fill="url(#eb15)" stroke="#000" stroke-width="1"/><rect x="905.9999999999999" y="807.6566666666666" width="9.3" height="124.34333333333336" fill="url(#eb16)" stroke="#000" stroke-width="1"/><rect x="917.1999999999999" y="812.7666666666667" width="9.3" height="119.23333333333335" fill="url(#eb17)" stroke="#000" stroke-width="1"/><rect x="928.3999999999999" y="782.1066666666667" width="9.3" height="149.89333333333332" fill="url(#eb18)" stroke="#000" stroke-width="1"/><rect x="939.5999999999999" y="850.24" width="9.3" height="81.75999999999999" fill="url(#eb19)" stroke="#000" stroke-width="1"/><rect x="987.5" y="809.36" width="9.3" height="122.63999999999999" fill="url(#eb20)" stroke="#000" stroke-width="1"/><rect x="998.7" y="761.6666666666667" width="9.3" height="170.33333333333326" fill="url(#eb21)" stroke="#000" stroke-width="1"/><rect x="1009.9" y="753.15" width="9.3" height="178.85000000000002" fill="url(#eb22)" stroke="#000" stroke-width="1"/><rect x="1021.1" y="799.9916666666667" width="9.3" height="132.00833333333333" fill="url(#eb23)" stroke="#000" stroke-width="1"/><rect x="1032.3" y="764.2216666666667" width="9.3" height="167.7783333333333" fill="url(#eb24)" stroke="#000" stroke-width="1"/><rect x="1043.5" y="840.02" width="9.3" height="91.98000000000002" fill="url(#eb25)" stroke="#000" stroke-width="1"/><rect x="1091.4" y="787.2166666666667" width="9.3" height="144.7833333333333" fill="url(#eb26)" stroke="#000" stroke-width="1"/><rect x="1102.6000000000001" y="752.2983333333333" width="9.3" height="179.7016666666667" fill="url(#eb27)" stroke="#000" stroke-width="1"/><rect x="1113.8000000000002" y="676.5" width="9.3" height="255.5" fill="url(#eb28)" stroke="#000" stroke-width="1"/><rect x="1125.0" y="785.5133333333333" width="9.3" height="146.48666666666668" fill="url(#eb29)" stroke="#000" stroke-width="1"/><rect x="1136.2" y="746.3366666666667" width="9.3" height="185.6633333333333" fill="url(#eb30)" stroke="#000" stroke-width="1"/><rect x="1147.4" y="817.8766666666667" width="9.3" height="114.12333333333333" fill="url(#eb31)" stroke="#000" stroke-width="1"/><line x1="560.5" y1="759.9633333333334" x2="1184" y2="759.9633333333334" stroke="#e02828" stroke-width="2.2"/><line x1="560.5" y1="880.9" x2="1184" y2="880.9" stroke="#e6e000" stroke-width="1.6"/><line x1="560.5" y1="914.9666666666667" x2="1184" y2="914.9666666666667" stroke="#18a018" stroke-width="1.5"/></svg><div style="position:absolute;left:1205px;top:131.5px;width:720px;height:589px;background:#333;box-shadow:inset 0 0 0 7px #c8c400;"></div><div style="position:absolute;left:1242px;top:163px;width:667px;height:521.3px;background:#262626;"></div><div style="position:absolute;left:0px;top:0px;width:1909px;height:1051px;clip-path:polygon(1380.2px 681.2px,1380.2px 681.2px,1380.1px 681.2px,1380.0px 681.3px,1379.9px 681.3px,1379.8px 681.3px,1379.6px 681.3px,1379.4px 681.3px,1379.2px 681.3px,1378.9px 681.3px,1378.7px 681.3px,1378.4px 681.2px,1378.1px 681.1px,1377.8px 681.0px,1377.5px 680.9px,1377.2px 680.7px,1376.9px 680.5px,1376.5px 680.3px,1376.1px 680.0px,1375.6px 679.7px,1375.1px 679.4px,1374.6px 679.0px,1374.0px 678.6px,1373.3px 678.1px,1372.5px 677.6px,1371.7px 677.0px,1370.8px 676.4px,1369.8px 675.8px,1368.8px 675.0px,1367.6px 674.3px,1366.3px 673.3px,1365.0px 672.4px,1363.5px 671.5px,1361.9px 670.5px,1360.2px 669.2px,1358.4px 667.8px,1356.3px 665.9px,1354.0px 663.6px,1351.3px 660.9px,1348.5px 657.9px,1345.7px 654.7px,1343.0px 651.6px,1340.5px 648.5px,1338.4px 645.7px,1336.5px 643.0px,1334.7px 640.2px,1332.9px 637.3px,1331.1px 634.2px,1329.0px 630.6px,1326.8px 626.6px,1324.5px 622.4px,1322.2px 617.9px,1319.7px 613.0px,1317.1px 607.8px,1314.5px 602.2px,1311.7px 596.1px,1308.8px 589.7px,1305.8px 583.0px,1302.7px 575.8px,1299.6px 568.2px,1296.5px 560.1px,1293.5px 551.4px,1290.4px 542.4px,1287.3px 532.8px,1284.2px 522.8px,1281.1px 512.5px,1278.0px 501.7px,1275.0px 490.4px,1272.0px 478.7px,1269.0px 466.5px,1266.0px 454.0px,1263.2px 441.4px,1260.7px 428.8px,1258.2px 416.1px,1255.9px 403.1px,1253.7px 389.9px,1251.7px 376.7px,1250.0px 363.7px,1248.5px 351.0px,1247.3px 338.5px,1246.3px 326.1px,1245.5px 313.8px,1245.1px 301.8px,1244.9px 290.2px,1245.1px 279.0px,1245.6px 268.1px,1246.5px 257.6px,1247.6px 247.3px,1249.1px 237.6px,1250.9px 228.4px,1253.0px 219.9px,1255.6px 212.1px,1258.5px 204.7px,1261.7px 198.0px,1265.2px 191.8px,1269.0px 186.4px,1272.9px 181.7px,1277.1px 177.8px,1281.5px 174.7px,1286.2px 172.2px,1291.1px 170.4px,1296.0px 169.1px,1301.0px 168.2px,1306.1px 167.8px,1311.3px 168.1px,1316.6px 168.9px,1321.9px 170.1px,1327.3px 171.4px,1332.7px 172.9px,1338.0px 174.5px,1343.4px 176.4px,1348.8px 178.5px,1354.2px 180.8px,1359.6px 183.1px,1364.8px 185.4px,1370.0px 187.8px,1375.1px 190.2px,1380.2px 192.7px,1385.2px 195.2px,1390.2px 197.8px,1395.2px 200.5px,1400.1px 203.2px,1405.0px 205.9px,1409.8px 208.7px,1414.7px 211.6px,1419.5px 214.5px,1424.3px 217.4px,1429.1px 220.4px,1433.9px 223.4px,1438.7px 226.5px,1443.5px 229.6px,1448.3px 232.8px,1453.0px 236.0px,1457.8px 239.2px,1462.5px 242.4px,1467.3px 245.7px,1472.0px 249.1px,1476.7px 252.4px,1481.5px 255.8px,1486.2px 259.2px,1490.9px 262.6px,1495.6px 266.0px,1500.4px 269.5px,1505.1px 272.9px,1509.8px 276.4px,1514.6px 280.0px,1519.3px 283.5px,1524.0px 287.0px,1528.8px 290.6px,1533.5px 294.2px,1538.2px 297.7px,1543.0px 301.3px,1547.7px 304.9px,1552.4px 308.5px,1557.1px 312.1px,1561.8px 315.7px,1566.5px 319.3px,1571.2px 322.9px,1575.9px 326.5px,1580.6px 330.2px,1585.3px 333.8px,1590.0px 337.4px,1594.6px 340.9px,1599.2px 344.5px,1603.9px 348.1px,1608.5px 351.7px,1613.1px 355.2px,1617.6px 358.8px,1622.2px 362.3px,1626.7px 365.8px,1631.2px 369.3px,1635.7px 372.8px,1640.1px 376.2px,1644.5px 379.7px,1648.9px 383.1px,1653.3px 386.5px,1657.6px 389.8px,1661.9px 393.2px,1666.2px 396.5px,1670.4px 399.8px,1674.6px 403.0px,1678.7px 406.2px,1682.8px 409.4px,1686.9px 412.5px,1690.9px 415.6px,1694.8px 418.7px,1698.7px 421.7px,1702.5px 424.7px,1706.3px 427.6px,1710.0px 430.5px,1713.7px 433.4px,1717.2px 436.2px,1720.7px 438.9px,1723.9px 441.4px,1726.9px 443.7px,1729.7px 445.9px,1732.7px 448.2px,1736.0px 450.8px,1739.8px 453.7px,1744.4px 457.3px,1749.6px 461.3px,1755.2px 465.6px,1760.7px 469.9px,1766.0px 473.9px,1770.6px 477.6px,1774.7px 480.7px,1778.5px 483.7px,1782.0px 486.4px,1785.2px 488.9px,1788.2px 491.2px,1791.1px 493.5px,1793.7px 495.5px,1796.1px 497.4px,1798.3px 499.1px,1800.3px 500.6px,1802.2px 502.1px,1804.1px 503.6px,1805.8px 504.9px,1807.4px 506.2px,1808.9px 507.4px,1810.3px 508.4px,1811.7px 509.5px,1812.9px 510.4px,1814.0px 511.3px,1815.1px 512.1px,1816.0px 512.8px,1816.9px 513.5px,1817.7px 514.1px,1818.4px 514.7px,1819.1px 515.2px,1819.7px 515.7px,1820.2px 516.1px,1820.7px 516.4px,1821.1px 516.8px,1821.6px 517.2px,1822.1px 517.6px,1822.6px 517.9px,1823.1px 518.3px,1823.6px 518.7px,1824.0px 519.0px,1824.3px 519.3px,1824.6px 519.5px,1824.8px 519.7px,1825.0px 519.8px,1825.1px 519.9px,1825.3px 520.0px,1825.4px 520.1px);background:conic-gradient(from 0deg at 1490.3px 480.7px,#1e7400 0deg,#2e6a00 15deg,#4e5e00 35deg,#6a4a00 62deg,#7a2a00 83deg,#980010 100deg,#a00040 115deg,#9a0070 140deg,#8000a0 165deg,#5000a8 192deg,#2000b0 216deg,#0040a8 242deg,#008a80 270deg,#009060 282deg,#009a00 298deg,#009a00 340deg,#1e7400 360deg);"></div><div style="position:absolute;left:0px;top:0px;width:1909px;height:1051px;clip-path:polygon(1781.9px 486.2px,1452.4px 257.2px,1361.1px 647.2px);background:radial-gradient(circle at 1490.3px 480.7px,#ffffff 0px,rgba(255,255,255,0.78) 14px,rgba(255,255,255,0.36) 40px,rgba(255,255,255,0.1) 85px,rgba(255,255,255,0) 135px),conic-gradient(from 0deg at 1490.3px 480.7px,#30ff00 0deg,#60ff00 12deg,#b0ff00 26deg,#ffff00 37deg,#ffa000 56deg,#ff4800 75deg,#ff0000 91deg,#ff0060 128deg,#ff00ff 170deg,#8000ff 196deg,#0000ff 218deg,#0080ff 246deg,#00ffff 271deg,#00ff80 312deg,#00ff00 345deg,#30ff00 360deg);"></div><div style="position:absolute;left:1718px;top:161px;width:191px;height:193px;background:#8a8a8a;"></div><div style="position:absolute;left:1721px;top:163.5px;width:188px;height:188px;overflow:hidden;"><div style="position:absolute;left:0;top:0;width:188px;height:188px;background:#262626;"></div><div style="position:absolute;left:0;top:0;width:188px;height:188px;clip-path:polygon(0px 0px,48px 0px,188px 136px,188px 188px,0px 188px);background:linear-gradient(135deg,#4a9000 0%,#7a8a00 45%,#9a5000 100%);"></div><div style="position:absolute;left:0;top:0;width:188px;height:188px;clip-path:polygon(0px 12px,188px 180.5px,188px 188px,0px 188px);background:linear-gradient(135deg,#90ff00 0%,#c8ff00 35%,#ffff00 55%,#ffb000 80%,#ff8800 100%);"></div></div><svg width="1909" height="1051" viewBox="0 0 1909 1051" style="position:absolute;left:0;top:0"><text x="1562" y="158.5" font-size="14.5" fill="#dcdcdc" text-anchor="middle" textLength="78" lengthAdjust="spacingAndGlyphs">CIE 1931 xy</text><line x1="1242" y1="163" x2="1718" y2="163" stroke="#a3a3a3" stroke-width="2"/><line x1="1242" y1="163" x2="1242" y2="690" stroke="#a3a3a3" stroke-width="1.5"/><line x1="1242" y1="684.3" x2="1909" y2="684.3" stroke="#a3a3a3" stroke-width="1.8"/><line x1="1242.0" y1="684.3" x2="1242.0" y2="690" stroke="#a3a3a3" stroke-width="1.5"/><text x="1242.0" y="706" font-size="14.5" fill="#dcdcdc" text-anchor="middle" textLength="7.5" lengthAdjust="spacingAndGlyphs">0</text><line x1="1321.4" y1="684.3" x2="1321.4" y2="690" stroke="#a3a3a3" stroke-width="1.5"/><text x="1321.4" y="706" font-size="14.5" fill="#dcdcdc" text-anchor="middle" textLength="21" lengthAdjust="spacingAndGlyphs">0,1</text><line x1="1400.8" y1="684.3" x2="1400.8" y2="690" stroke="#a3a3a3" stroke-width="1.5"/><text x="1400.8" y="706" font-size="14.5" fill="#dcdcdc" text-anchor="middle" textLength="21" lengthAdjust="spacingAndGlyphs">0,2</text><line x1="1480.2" y1="684.3" x2="1480.2" y2="690" stroke="#a3a3a3" stroke-width="1.5"/><text x="1480.2" y="706" font-size="14.5" fill="#dcdcdc" text-anchor="middle" textLength="21" lengthAdjust="spacingAndGlyphs">0,3</text><line x1="1559.6" y1="684.3" x2="1559.6" y2="690" stroke="#a3a3a3" stroke-width="1.5"/><text x="1559.6" y="706" font-size="14.5" fill="#dcdcdc" text-anchor="middle" textLength="21" lengthAdjust="spacingAndGlyphs">0,4</text><line x1="1639.0" y1="684.3" x2="1639.0" y2="690" stroke="#a3a3a3" stroke-width="1.5"/><text x="1639.0" y="706" font-size="14.5" fill="#dcdcdc" text-anchor="middle" textLength="21" lengthAdjust="spacingAndGlyphs">0,5</text><line x1="1718.4" y1="684.3" x2="1718.4" y2="690" stroke="#a3a3a3" stroke-width="1.5"/><text x="1718.4" y="706" font-size="14.5" fill="#dcdcdc" text-anchor="middle" textLength="21" lengthAdjust="spacingAndGlyphs">0,6</text><line x1="1797.8" y1="684.3" x2="1797.8" y2="690" stroke="#a3a3a3" stroke-width="1.5"/><text x="1797.8" y="706" font-size="14.5" fill="#dcdcdc" text-anchor="middle" textLength="21" lengthAdjust="spacingAndGlyphs">0,7</text><line x1="1877.2" y1="684.3" x2="1877.2" y2="690" stroke="#a3a3a3" stroke-width="1.5"/><text x="1877.2" y="706" font-size="14.5" fill="#dcdcdc" text-anchor="middle" textLength="21" lengthAdjust="spacingAndGlyphs">0,8</text><line x1="1236" y1="684.3" x2="1242" y2="684.3" stroke="#a3a3a3" stroke-width="1.2"/><text x="1235.5" y="689.3" font-size="14.5" fill="#dcdcdc" text-anchor="end" textLength="7.5" lengthAdjust="spacingAndGlyphs">0</text><line x1="1236" y1="622.4" x2="1242" y2="622.4" stroke="#a3a3a3" stroke-width="1.2"/><text x="1235.5" y="627.4" font-size="14.5" fill="#dcdcdc" text-anchor="end" textLength="21" lengthAdjust="spacingAndGlyphs">0,1</text><line x1="1236" y1="560.5" x2="1242" y2="560.5" stroke="#a3a3a3" stroke-width="1.2"/><text x="1235.5" y="565.5" font-size="14.5" fill="#dcdcdc" text-anchor="end" textLength="21" lengthAdjust="spacingAndGlyphs">0,2</text><line x1="1236" y1="498.59999999999997" x2="1242" y2="498.59999999999997" stroke="#a3a3a3" stroke-width="1.2"/><text x="1235.5" y="503.59999999999997" font-size="14.5" fill="#dcdcdc" text-anchor="end" textLength="21" lengthAdjust="spacingAndGlyphs">0,3</text><line x1="1236" y1="436.69999999999993" x2="1242" y2="436.69999999999993" stroke="#a3a3a3" stroke-width="1.2"/><text x="1235.5" y="441.69999999999993" font-size="14.5" fill="#dcdcdc" text-anchor="end" textLength="21" lengthAdjust="spacingAndGlyphs">0,4</text><line x1="1236" y1="374.79999999999995" x2="1242" y2="374.79999999999995" stroke="#a3a3a3" stroke-width="1.2"/><text x="1235.5" y="379.79999999999995" font-size="14.5" fill="#dcdcdc" text-anchor="end" textLength="21" lengthAdjust="spacingAndGlyphs">0,5</text><line x1="1236" y1="312.9" x2="1242" y2="312.9" stroke="#a3a3a3" stroke-width="1.2"/><text x="1235.5" y="317.9" font-size="14.5" fill="#dcdcdc" text-anchor="end" textLength="21" lengthAdjust="spacingAndGlyphs">0,6</text><line x1="1236" y1="251.0" x2="1242" y2="251.0" stroke="#a3a3a3" stroke-width="1.2"/><text x="1235.5" y="256.0" font-size="14.5" fill="#dcdcdc" text-anchor="end" textLength="21" lengthAdjust="spacingAndGlyphs">0,7</text><line x1="1236" y1="189.0999999999999" x2="1242" y2="189.0999999999999" stroke="#a3a3a3" stroke-width="1.2"/><text x="1235.5" y="194.0999999999999" font-size="14.5" fill="#dcdcdc" text-anchor="end" textLength="21" lengthAdjust="spacingAndGlyphs">0,8</text><rect x="1393.6" y="470.6" width="14" height="14" fill="none" stroke="#f4fff4" stroke-opacity="0.92" stroke-width="2"/><rect x="1411.4" y="471.3" width="14" height="14" fill="none" stroke="#f4fff4" stroke-opacity="0.92" stroke-width="2"/><rect x="1428.8" y="471.3" width="14" height="14" fill="none" stroke="#f4fff4" stroke-opacity="0.92" stroke-width="2"/><rect x="1446.7" y="471.3" width="14" height="14" fill="none" stroke="#f4fff4" stroke-opacity="0.92" stroke-width="2"/><rect x="1464.5" y="471.3" width="14" height="14" fill="none" stroke="#f4fff4" stroke-opacity="0.92" stroke-width="2"/><rect x="1540.3" y="472.4" width="14" height="14" fill="none" stroke="#f4fff4" stroke-opacity="0.92" stroke-width="2"/><rect x="1595.2" y="474.3" width="14" height="14" fill="none" stroke="#f4fff4" stroke-opacity="0.92" stroke-width="2"/><rect x="1655.4" y="475.4" width="14" height="14" fill="none" stroke="#f4fff4" stroke-opacity="0.92" stroke-width="2"/><rect x="1708.5" y="476.9" width="14" height="14" fill="none" stroke="#f4fff4" stroke-opacity="0.92" stroke-width="2"/><rect x="1774.6" y="478.0" width="14" height="14" fill="none" stroke="#f4fff4" stroke-opacity="0.92" stroke-width="2"/><rect x="1474.5" y="427.9" width="14" height="14" fill="none" stroke="#f4fff4" stroke-opacity="0.92" stroke-width="2"/><rect x="1503.1" y="446.4" width="14" height="14" fill="none" stroke="#f4fff4" stroke-opacity="0.92" stroke-width="2"/><rect x="1486.4" y="493.6" width="14" height="14" fill="none" stroke="#f4fff4" stroke-opacity="0.92" stroke-width="2"/><rect x="1456.7" y="504.0" width="14" height="14" fill="none" stroke="#f4fff4" stroke-opacity="0.92" stroke-width="2"/><rect x="1490.1" y="515.9" width="14" height="14" fill="none" stroke="#f4fff4" stroke-opacity="0.92" stroke-width="2"/><rect x="1431.4" y="538.5" width="14" height="14" fill="none" stroke="#f4fff4" stroke-opacity="0.92" stroke-width="2"/><rect x="1493.8" y="538.5" width="14" height="14" fill="none" stroke="#f4fff4" stroke-opacity="0.92" stroke-width="2"/><rect x="1405.8" y="570.8" width="14" height="14" fill="none" stroke="#f4fff4" stroke-opacity="0.92" stroke-width="2"/><rect x="1497.5" y="559.0" width="14" height="14" fill="none" stroke="#f4fff4" stroke-opacity="0.92" stroke-width="2"/><rect x="1380.6" y="603.2" width="14" height="14" fill="none" stroke="#f4fff4" stroke-opacity="0.92" stroke-width="2"/><rect x="1501.3" y="582.0" width="14" height="14" fill="none" stroke="#f4fff4" stroke-opacity="0.92" stroke-width="2"/><rect x="1352.7" y="638.8" width="14" height="14" fill="none" stroke="#f4fff4" stroke-opacity="0.92" stroke-width="2"/><rect x="1445.5" y="248.0" width="14" height="14" fill="none" stroke="#f4fff4" stroke-opacity="0.92" stroke-width="2"/><rect x="1451.9" y="297.4" width="14" height="14" fill="none" stroke="#f4fff4" stroke-opacity="0.92" stroke-width="2"/><rect x="1460.4" y="337.9" width="14" height="14" fill="none" stroke="#f4fff4" stroke-opacity="0.92" stroke-width="2"/><rect x="1467.1" y="381.0" width="14" height="14" fill="none" stroke="#f4fff4" stroke-opacity="0.92" stroke-width="2"/><rect x="1582.2" y="342.7" width="14" height="14" fill="none" stroke="#f4fff4" stroke-opacity="0.92" stroke-width="2"/><rect x="1561.4" y="369.8" width="14" height="14" fill="none" stroke="#f4fff4" stroke-opacity="0.92" stroke-width="2"/><rect x="1541.0" y="395.8" width="14" height="14" fill="none" stroke="#f4fff4" stroke-opacity="0.92" stroke-width="2"/><rect x="1521.7" y="419.6" width="14" height="14" fill="none" stroke="#f4fff4" stroke-opacity="0.92" stroke-width="2"/><rect x="1806.5" y="250.6" width="14" height="14" fill="none" stroke="#f4fff4" stroke-opacity="0.92" stroke-width="2"/><rect x="1753.0" y="337.9" width="14" height="14" fill="none" stroke="#f4fff4" stroke-opacity="0.92" stroke-width="2"/><rect x="1483" y="472.7" width="14" height="14" fill="none" stroke="#111" stroke-width="2"/><circle cx="1513.8" cy="322.6" r="4.6" fill="#3c9a3c" fill-opacity="0.85" stroke="#1a1a1a" stroke-width="1.3"/><circle cx="1508.3" cy="355.3" r="4.6" fill="#4aa04a" fill-opacity="0.85" stroke="#1a1a1a" stroke-width="1.3"/><circle cx="1503.8" cy="385.7" r="4.6" fill="#5aa85a" fill-opacity="0.85" stroke="#1a1a1a" stroke-width="1.3"/><circle cx="1498.2" cy="414.7" r="4.6" fill="#80b080" fill-opacity="0.85" stroke="#1a1a1a" stroke-width="1.3"/><circle cx="1585.5" cy="377.5" r="4.6" fill="#a0a040" fill-opacity="0.85" stroke="#1a1a1a" stroke-width="1.3"/><circle cx="1564.7" cy="399.8" r="4.6" fill="#a8a860" fill-opacity="0.85" stroke="#1a1a1a" stroke-width="1.3"/><circle cx="1544.7" cy="421" r="4.6" fill="#a8a878" fill-opacity="0.85" stroke="#1a1a1a" stroke-width="1.3"/><circle cx="1526.1" cy="438.6" r="4.6" fill="#a8a890" fill-opacity="0.85" stroke="#1a1a1a" stroke-width="1.3"/><circle cx="1508.3" cy="458.3" r="4.6" fill="#a8a8a0" fill-opacity="0.85" stroke="#1a1a1a" stroke-width="1.3"/><circle cx="1494.5" cy="447.1" r="4.6" fill="#98a898" fill-opacity="0.85" stroke="#1a1a1a" stroke-width="1.3"/><circle cx="1432.1" cy="483.9" r="4.6" fill="#30a8a0" fill-opacity="0.85" stroke="#1a1a1a" stroke-width="1.3"/><circle cx="1443.6" cy="482.4" r="4.6" fill="#60a8a4" fill-opacity="0.85" stroke="#1a1a1a" stroke-width="1.3"/><circle cx="1455.2" cy="480.5" r="4.6" fill="#80aaa8" fill-opacity="0.85" stroke="#1a1a1a" stroke-width="1.3"/><circle cx="1466.3" cy="480.5" r="4.6" fill="#90aaaa" fill-opacity="0.85" stroke="#1a1a1a" stroke-width="1.3"/><circle cx="1477.8" cy="479.4" r="4.6" fill="#a0aaaa" fill-opacity="0.85" stroke="#1a1a1a" stroke-width="1.3"/><circle cx="1526.8" cy="476.8" r="4.6" fill="#a89898" fill-opacity="0.85" stroke="#1a1a1a" stroke-width="1.3"/><circle cx="1564.7" cy="473.9" r="4.6" fill="#a88888" fill-opacity="0.85" stroke="#1a1a1a" stroke-width="1.3"/><circle cx="1606.7" cy="470.9" r="4.6" fill="#a87070" fill-opacity="0.85" stroke="#1a1a1a" stroke-width="1.3"/><circle cx="1648.6" cy="466.8" r="4.6" fill="#a85858" fill-opacity="0.85" stroke="#1a1a1a" stroke-width="1.3"/><circle cx="1698.8" cy="464.6" r="4.6" fill="#c02020" fill-opacity="0.85" stroke="#1a1a1a" stroke-width="1.3"/><circle cx="1487.1" cy="495" r="4.6" fill="#a8a0a8" fill-opacity="0.85" stroke="#1a1a1a" stroke-width="1.3"/><circle cx="1464.8" cy="505.4" r="4.6" fill="#9898a8" fill-opacity="0.85" stroke="#1a1a1a" stroke-width="1.3"/><circle cx="1484.5" cy="510.2" r="4.6" fill="#a898a8" fill-opacity="0.85" stroke="#1a1a1a" stroke-width="1.3"/><circle cx="1441.4" cy="530.3" r="4.6" fill="#8888a8" fill-opacity="0.85" stroke="#1a1a1a" stroke-width="1.3"/><circle cx="1481.9" cy="527.7" r="4.6" fill="#a888a8" fill-opacity="0.85" stroke="#1a1a1a" stroke-width="1.3"/><circle cx="1419.1" cy="555.2" r="4.6" fill="#7070a8" fill-opacity="0.85" stroke="#1a1a1a" stroke-width="1.3"/><circle cx="1479.3" cy="544.4" r="4.6" fill="#a870a8" fill-opacity="0.85" stroke="#1a1a1a" stroke-width="1.3"/><circle cx="1393.1" cy="580.4" r="4.6" fill="#5050a8" fill-opacity="0.85" stroke="#1a1a1a" stroke-width="1.3"/><circle cx="1476.3" cy="562.2" r="4.6" fill="#c030c0" fill-opacity="0.85" stroke="#1a1a1a" stroke-width="1.3"/><circle cx="1368.2" cy="608.7" r="4.6" fill="#2020a0" fill-opacity="0.85" stroke="#1a1a1a" stroke-width="1.3"/><circle cx="1804.3" cy="341.2" r="4.6" fill="#b0b040" fill-opacity="0.85" stroke="#1a1a1a" stroke-width="1.3"/><circle cx="1489.5" cy="479.7" r="4.3" fill="#fff" stroke="#222" stroke-width="1.3"/></svg><div style="position:absolute;left:1205.5px;top:728px;width:620px;height:210px;background:#0a0a0a;"></div><div style="position:absolute;left:1207px;top:729.5px;width:617px;height:31.5px;background:linear-gradient(#242424 0%,#1e1e1e 45%,#0e0e0e 55%,#0c0c0c 100%);"></div><div style="position:absolute;left:1207px;top:761.0px;width:617px;height:29.4px;background:#3b3b3b;"></div><div style="position:absolute;left:1207px;top:790.4px;width:617px;height:29.4px;background:#828282;"></div><div style="position:absolute;left:1207px;top:819.8px;width:617px;height:29.4px;background:#3b3b3b;"></div><div style="position:absolute;left:1207px;top:849.2px;width:617px;height:29.4px;background:#828282;"></div><div style="position:absolute;left:1207px;top:878.6px;width:617px;height:29.4px;background:#3b3b3b;"></div><div style="position:absolute;left:1207px;top:908.0px;width:617px;height:29.4px;background:#828282;"></div><svg width="1909" height="1051" viewBox="0 0 1909 1051" style="position:absolute;left:0;top:0"><text x="1448.8" y="752.7" font-size="19" fill="#f4f4f4" text-anchor="middle" textLength="41" lengthAdjust="spacingAndGlyphs">20%</text><text x="1531.7" y="752.7" font-size="19" fill="#f4f4f4" text-anchor="middle" textLength="41" lengthAdjust="spacingAndGlyphs">40%</text><text x="1614.9" y="752.7" font-size="19" fill="#f4f4f4" text-anchor="middle" textLength="41" lengthAdjust="spacingAndGlyphs">60%</text><text x="1697.7" y="752.7" font-size="19" fill="#f4f4f4" text-anchor="middle" textLength="41" lengthAdjust="spacingAndGlyphs">80%</text><text x="1782" y="752.7" font-size="19" fill="#f4f4f4" text-anchor="middle" textLength="54" lengthAdjust="spacingAndGlyphs">100%</text><text x="1225.3" y="783.1" font-size="19" fill="#f6f6f6" text-anchor="start" font-weight="bold" textLength="88" lengthAdjust="spacingAndGlyphs">x: CIE31</text><text x="1413.6" y="783.1" font-size="19" fill="#f6f6f6" text-anchor="start" textLength="43.8" lengthAdjust="spacingAndGlyphs">0,34</text><text x="1497.1" y="783.1" font-size="19" fill="#f6f6f6" text-anchor="start" textLength="43.8" lengthAdjust="spacingAndGlyphs">0,36</text><text x="1580" y="783.1" font-size="19" fill="#f6f6f6" text-anchor="start" textLength="43.8" lengthAdjust="spacingAndGlyphs">0,38</text><text x="1663.5" y="783.1" font-size="19" fill="#f6f6f6" text-anchor="start" textLength="43.8" lengthAdjust="spacingAndGlyphs">0,41</text><text x="1746.7" y="783.1" font-size="19" fill="#f6f6f6" text-anchor="start" textLength="43.8" lengthAdjust="spacingAndGlyphs">0,43</text><text x="1225.3" y="812.25" font-size="19" fill="#f6f6f6" text-anchor="start" font-weight="bold" textLength="88" lengthAdjust="spacingAndGlyphs">y: CIE31</text><text x="1413.6" y="812.25" font-size="19" fill="#f6f6f6" text-anchor="start" textLength="43.8" lengthAdjust="spacingAndGlyphs">0,36</text><text x="1497.1" y="812.25" font-size="19" fill="#f6f6f6" text-anchor="start" textLength="43.8" lengthAdjust="spacingAndGlyphs">0,39</text><text x="1580" y="812.25" font-size="19" fill="#f6f6f6" text-anchor="start" textLength="43.8" lengthAdjust="spacingAndGlyphs">0,42</text><text x="1663.5" y="812.25" font-size="19" fill="#f6f6f6" text-anchor="start" textLength="43.8" lengthAdjust="spacingAndGlyphs">0,46</text><text x="1746.7" y="812.25" font-size="19" fill="#f6f6f6" text-anchor="start" textLength="43.8" lengthAdjust="spacingAndGlyphs">0,49</text><text x="1225.3" y="841.4" font-size="19" fill="#f6f6f6" text-anchor="start" font-weight="bold" textLength="14" lengthAdjust="spacingAndGlyphs">Y</text><text x="1414.6" y="841.4" font-size="19" fill="#f6f6f6" text-anchor="start" textLength="68.3" lengthAdjust="spacingAndGlyphs">128,44</text><text x="1498.1" y="841.4" font-size="19" fill="#f6f6f6" text-anchor="start" textLength="68.3" lengthAdjust="spacingAndGlyphs">123,54</text><text x="1581" y="841.4" font-size="19" fill="#f6f6f6" text-anchor="start" textLength="68.3" lengthAdjust="spacingAndGlyphs">119,45</text><text x="1664.5" y="841.4" font-size="19" fill="#f6f6f6" text-anchor="start" textLength="68.3" lengthAdjust="spacingAndGlyphs">115,79</text><text x="1747.7" y="841.4" font-size="19" fill="#f6f6f6" text-anchor="start" textLength="68.3" lengthAdjust="spacingAndGlyphs">111,58</text><text x="1225.3" y="870.55" font-size="19" fill="#f6f6f6" text-anchor="start" font-weight="bold" textLength="161.5" lengthAdjust="spacingAndGlyphs">Target x:CIE31</text><text x="1413.6" y="870.55" font-size="19" fill="#f6f6f6" text-anchor="start" textLength="43.8" lengthAdjust="spacingAndGlyphs">0,34</text><text x="1497.1" y="870.55" font-size="19" fill="#f6f6f6" text-anchor="start" textLength="43.8" lengthAdjust="spacingAndGlyphs">0,36</text><text x="1580" y="870.55" font-size="19" fill="#f6f6f6" text-anchor="start" textLength="43.8" lengthAdjust="spacingAndGlyphs">0,39</text><text x="1663.5" y="870.55" font-size="19" fill="#f6f6f6" text-anchor="start" textLength="43.8" lengthAdjust="spacingAndGlyphs">0,41</text><text x="1746.7" y="870.55" font-size="19" fill="#f6f6f6" text-anchor="start" textLength="43.8" lengthAdjust="spacingAndGlyphs">0,44</text><text x="1225.3" y="899.7" font-size="19" fill="#f6f6f6" text-anchor="start" font-weight="bold" textLength="161.5" lengthAdjust="spacingAndGlyphs">Target y:CIE31</text><text x="1413.6" y="899.7" font-size="19" fill="#f6f6f6" text-anchor="start" textLength="43.8" lengthAdjust="spacingAndGlyphs">0,37</text><text x="1497.1" y="899.7" font-size="19" fill="#f6f6f6" text-anchor="start" textLength="43.8" lengthAdjust="spacingAndGlyphs">0,41</text><text x="1580" y="899.7" font-size="19" fill="#f6f6f6" text-anchor="start" textLength="43.8" lengthAdjust="spacingAndGlyphs">0,45</text><text x="1663.5" y="899.7" font-size="19" fill="#f6f6f6" text-anchor="start" textLength="43.8" lengthAdjust="spacingAndGlyphs">0,49</text><text x="1746.7" y="899.7" font-size="19" fill="#f6f6f6" text-anchor="start" textLength="43.8" lengthAdjust="spacingAndGlyphs">0,54</text><text x="1225.3" y="928.85" font-size="19" fill="#f6f6f6" text-anchor="start" font-weight="bold" textLength="93.5" lengthAdjust="spacingAndGlyphs">Target Y</text><text x="1414.6" y="928.85" font-size="19" fill="#f6f6f6" text-anchor="start" textLength="68.3" lengthAdjust="spacingAndGlyphs">132,69</text><text x="1498.1" y="928.85" font-size="19" fill="#f6f6f6" text-anchor="start" textLength="68.3" lengthAdjust="spacingAndGlyphs">130,33</text><text x="1581" y="928.85" font-size="19" fill="#f6f6f6" text-anchor="start" textLength="68.3" lengthAdjust="spacingAndGlyphs">128,35</text><text x="1664.5" y="928.85" font-size="19" fill="#f6f6f6" text-anchor="start" textLength="68.3" lengthAdjust="spacingAndGlyphs">126,73</text><text x="1747.7" y="928.85" font-size="19" fill="#f6f6f6" text-anchor="start" textLength="68.3" lengthAdjust="spacingAndGlyphs">125,31</text></svg><div style="position:absolute;left:1351px;top:58px;width:142px;height:30px;background:linear-gradient(#585858,#6c6c6c);border-radius:4px 4px 0 0;"></div><div style="position:absolute;left:1351px;top:58px;width:6px;height:30px;background:linear-gradient(90deg,#10c810,#30e030);border-radius:4px 0 0 0;"></div><div style="position:absolute;left:1457px;top:59px;width:1px;height:29px;background:#454545;"></div><div style="position:absolute;left:1499.5px;top:58px;width:208px;height:30px;background:linear-gradient(#585858,#6c6c6c);border-radius:4px 4px 0 0;"></div><div style="position:absolute;left:1499.5px;top:58px;width:6px;height:30px;background:linear-gradient(90deg,#10c810,#30e030);border-radius:4px 0 0 0;"></div><div style="position:absolute;left:1714px;top:58px;width:143px;height:30px;background:linear-gradient(#585858,#6c6c6c);border-radius:4px 4px 0 0;"></div><div style="position:absolute;left:1714px;top:58px;width:6px;height:30px;background:linear-gradient(90deg,#d8d800,#f0f000);border-radius:4px 0 0 0;"></div><div style="position:absolute;left:1860.5px;top:58px;width:32.5px;height:28px;background:linear-gradient(#5e5e5e,#6e6e6e);border:1.5px solid #8c8c8c;border-radius:4px;box-sizing:border-box;"></div><div style="position:absolute;left:1895px;top:58px;width:20px;height:28px;background:linear-gradient(#5e5e5e,#6e6e6e);border:1.5px solid #8c8c8c;border-radius:4px;box-sizing:border-box;"></div><svg width="1909" height="1051" viewBox="0 0 1909 1051" style="position:absolute;left:0;top:0"><circle cx="1438.2" cy="73.5" r="10.5" fill="url(#dd)"/><path d="M1433.2 71.5h10l-5 5.5z" fill="#fff"/><circle cx="1691.4" cy="73.5" r="10.5" fill="url(#dd)"/><path d="M1686.4 71.5h10l-5 5.5z" fill="#fff"/><circle cx="1840.8" cy="73.5" r="10.5" fill="url(#dd)"/><path d="M1835.8 71.5h10l-5 5.5z" fill="#fff"/><circle cx="1478" cy="73.3" r="12.2" fill="#0808e8" stroke="#f0f0ff" stroke-width="1.4"/><text x="1478" y="77" font-size="10" fill="#fff" text-anchor="middle" textLength="15" lengthAdjust="spacingAndGlyphs">713</text><text x="1359.6" y="70" font-size="11" fill="#ececec" text-anchor="start" textLength="65.3" lengthAdjust="spacingAndGlyphs">X-Rite i1Pro 3</text><text x="1359.6" y="84.3" font-size="11" fill="#ececec" text-anchor="start" textLength="55.5" lengthAdjust="spacingAndGlyphs">Direct View</text><text x="1508.6" y="70" font-size="11" fill="#ececec" text-anchor="start" textLength="169.4" lengthAdjust="spacingAndGlyphs">CalMAN Client 3 Pattern Generator</text><text x="1722.9" y="70" font-size="11" fill="#ececec" text-anchor="start" textLength="105" lengthAdjust="spacingAndGlyphs">Direct Display Control</text><circle cx="1876.5" cy="72" r="11" fill="#5a5a5a"/><g transform="translate(1876.5,72)"><rect x="-1.8" y="-8" width="3.6" height="4" transform="rotate(0)" fill="#c8c8c8"/><rect x="-1.8" y="-8" width="3.6" height="4" transform="rotate(45)" fill="#c8c8c8"/><rect x="-1.8" y="-8" width="3.6" height="4" transform="rotate(90)" fill="#c8c8c8"/><rect x="-1.8" y="-8" width="3.6" height="4" transform="rotate(135)" fill="#c8c8c8"/><rect x="-1.8" y="-8" width="3.6" height="4" transform="rotate(180)" fill="#c8c8c8"/><rect x="-1.8" y="-8" width="3.6" height="4" transform="rotate(225)" fill="#c8c8c8"/><rect x="-1.8" y="-8" width="3.6" height="4" transform="rotate(270)" fill="#c8c8c8"/><rect x="-1.8" y="-8" width="3.6" height="4" transform="rotate(315)" fill="#c8c8c8"/><circle r="5.5" fill="none" stroke="#c8c8c8" stroke-width="2.6"/></g><circle cx="1909" cy="72" r="10" fill="#5a5a5a"/><path d="M1901 72l7-5v10z" fill="#fff"/></svg><div style="position:absolute;left:201px;top:987px;width:1708px;height:64px;background:#2a2a2a;"></div><div style="position:absolute;left:201px;top:1049px;width:1397px;height:2px;background:#555;"></div><div style="position:absolute;left:202px;top:988px;width:44px;height:61px;background:linear-gradient(#a4a4a4,#8a8a8a 40%,#666 100%);border-radius:4px;"></div><div style="position:absolute;left:207px;top:1014px;width:35px;height:30px;background:#ffff00;border-radius:4px;box-shadow:0 0 0 1px #9a9a50;"></div><div style="position:absolute;left:253.5px;top:988px;width:149px;height:61px;background:linear-gradient(#a4a4a4,#8a8a8a 40%,#666 100%);border-radius:4px;"></div><div style="position:absolute;left:259.0px;top:993px;width:139px;height:36px;background:#c4c4a0;border-radius:4px;box-shadow:inset 0 0 0 1px rgba(120,120,80,0.5),inset 0 2px 3px rgba(0,0,0,0.15);"></div><div style="position:absolute;left:405.5px;top:988px;width:149px;height:61px;background:linear-gradient(#a4a4a4,#8a8a8a 40%,#666 100%);border-radius:4px;"></div><div style="position:absolute;left:411.0px;top:993px;width:139px;height:36px;background:#c6c48a;border-radius:4px;box-shadow:inset 0 0 0 1px rgba(120,120,80,0.5),inset 0 2px 3px rgba(0,0,0,0.15);"></div><div style="position:absolute;left:557px;top:988px;width:149px;height:61px;background:linear-gradient(#a4a4a4,#8a8a8a 40%,#666 100%);border-radius:4px;"></div><div style="position:absolute;left:562.5px;top:993px;width:139px;height:36px;background:#c6c270;border-radius:4px;box-shadow:inset 0 0 0 1px rgba(120,120,80,0.5),inset 0 2px 3px rgba(0,0,0,0.15);"></div><div style="position:absolute;left:708.5px;top:988px;width:149px;height:61px;background:linear-gradient(#a4a4a4,#8a8a8a 40%,#666 100%);border-radius:4px;"></div><div style="position:absolute;left:714.0px;top:993px;width:139px;height:36px;background:#c6c250;border-radius:4px;box-shadow:inset 0 0 0 1px rgba(120,120,80,0.5),inset 0 2px 3px rgba(0,0,0,0.15);"></div><div style="position:absolute;left:861px;top:988px;width:149px;height:61px;background:linear-gradient(#161616,#2a2a2a 60%,#3a3a3a);border-radius:4px;"></div><div style="position:absolute;left:866px;top:992.5px;width:140px;height:36.5px;background:#c6c200;border-radius:4px;box-shadow:0 0 0 1px #3a3a10;"></div><div style="position:absolute;left:1010px;top:988px;width:588px;height:61px;background:linear-gradient(#464646,#2e2e2e 50%,#1e1e1e);"></div><svg width="1909" height="1051" viewBox="0 0 1909 1051" style="position:absolute;left:0;top:0"><circle cx="224" cy="996.5" r="6" fill="#6a6a6a"/><path d="M219.5 999l4.5-5 4.5 5z" fill="#222"/><text x="328" y="1044.7" font-size="10.5" fill="#383838" text-anchor="middle" font-weight="bold" textLength="20" lengthAdjust="spacingAndGlyphs">20%</text><text x="480" y="1044.7" font-size="10.5" fill="#383838" text-anchor="middle" font-weight="bold" textLength="20" lengthAdjust="spacingAndGlyphs">40%</text><text x="631.5" y="1044.7" font-size="10.5" fill="#383838" text-anchor="middle" font-weight="bold" textLength="20" lengthAdjust="spacingAndGlyphs">60%</text><text x="783" y="1044.7" font-size="10.5" fill="#383838" text-anchor="middle" font-weight="bold" textLength="20" lengthAdjust="spacingAndGlyphs">80%</text><text x="935.5" y="1044.7" font-size="10.5" fill="#ffffff" text-anchor="middle" font-weight="bold" textLength="26" lengthAdjust="spacingAndGlyphs">100%</text></svg><div style="position:absolute;left:1598px;top:988px;width:47.5px;height:63px;background:linear-gradient(#a8a8a8,#8a8a8a);border-radius:5px 5px 0 0;"></div><div style="position:absolute;left:1598px;top:1006px;width:47.5px;height:1.5px;background:#555;"></div><div style="position:absolute;left:1645.5px;top:988px;width:47.5px;height:30px;background:linear-gradient(#ababab,#929292 50%,#7a7a7a);border-radius:5px 0 0 0;"></div><div style="position:absolute;left:1693px;top:988px;width:45px;height:30px;background:linear-gradient(#ababab,#929292 50%,#7a7a7a);"></div><div style="position:absolute;left:1693px;top:988px;width:1px;height:30px;background:#505050;"></div><div style="position:absolute;left:1738px;top:988px;width:45.40000000000009px;height:30px;background:linear-gradient(#ababab,#929292 50%,#7a7a7a);"></div><div style="position:absolute;left:1738px;top:988px;width:1px;height:30px;background:#505050;"></div><div style="position:absolute;left:1783.4px;top:988px;width:44.59999999999991px;height:30px;background:linear-gradient(#ababab,#929292 50%,#7a7a7a);"></div><div style="position:absolute;left:1783.4px;top:988px;width:1px;height:30px;background:#505050;"></div><div style="position:absolute;left:1828px;top:988px;width:45px;height:30px;background:linear-gradient(#404040,#2e2e2e);"></div><div style="position:absolute;left:1828px;top:988px;width:1px;height:30px;background:#505050;"></div><div style="position:absolute;left:1873px;top:988px;width:36px;height:30px;background:linear-gradient(#ababab,#929292 50%,#7a7a7a);"></div><div style="position:absolute;left:1873px;top:988px;width:1px;height:30px;background:#505050;"></div><div style="position:absolute;left:1645.5px;top:1019px;width:137.9px;height:32px;background:linear-gradient(#ababab,#929292 50%,#7a7a7a);"></div><div style="position:absolute;left:1783.4px;top:1019px;width:125.6px;height:32px;background:linear-gradient(#ababab,#929292 50%,#7a7a7a);"></div><div style="position:absolute;left:1783.4px;top:1019px;width:1px;height:32px;background:#606060;"></div><div style="position:absolute;left:1645.5px;top:1018px;width:263.5px;height:1px;background:#3a3a3a;"></div><div style="position:absolute;left:1606px;top:1013.5px;width:30px;height:30px;background:linear-gradient(#f0f0f0,#c8c8c8 50%,#a0a0a0);border:2.5px solid #222;border-radius:5px;box-sizing:border-box;"></div><div style="position:absolute;left:1614px;top:1021px;width:14.5px;height:14px;background:#000;"></div><svg width="1909" height="1051" viewBox="0 0 1909 1051" style="position:absolute;left:0;top:0"><circle cx="1621.5" cy="996.5" r="6.5" fill="#8a8a8a"/><path d="M1617 999l4.5-5 4.5 5z" fill="#222"/><circle cx="1669.5" cy="1002.5" r="10" fill="url(#nbc)"/><circle cx="1715.5" cy="1002.5" r="10" fill="url(#nbc)"/><circle cx="1760.5" cy="1002.5" r="10" fill="url(#nbc)"/><circle cx="1805.5" cy="1002.5" r="10" fill="url(#nbc)"/><circle cx="1893" cy="1002.5" r="10" fill="url(#nbc)"/><circle cx="1850.5" cy="1002.5" r="10" fill="#333"/><rect x="1666" y="999" width="7" height="7" fill="#333"/><path d="M1713 997.5v10l8-5z" fill="#333"/><text x="1760.5" y="1007" font-size="12" fill="#333" text-anchor="middle" font-weight="bold" textLength="14" lengthAdjust="spacingAndGlyphs">[··]</text><path d="M1800 1002.5c2-3 4-3 5.5 0s3.5 3 5.5 0c-2-3-4-3-5.5 0s-3.5 3-5.5 0z" fill="none" stroke="#333" stroke-width="2"/><path d="M1845.5 1000a5 5 0 0 1 9-1M1855.5 1005a5 5 0 0 1 -9 1" fill="none" stroke="#222" stroke-width="2.2"/><circle cx="1678" cy="1034" r="9" fill="url(#nbc)"/><circle cx="1891" cy="1034" r="9" fill="url(#nbc)"/><text x="1678" y="1039" font-size="16" fill="#444" text-anchor="middle" font-weight="bold">«</text><text x="1891" y="1039" font-size="16" fill="#444" text-anchor="middle" font-weight="bold">»</text><text x="1704.5" y="1041.5" font-size="21.5" fill="#3c3c3c" text-anchor="start" font-weight="bold" textLength="50.5" lengthAdjust="spacingAndGlyphs">Back</text><text x="1811" y="1041.5" font-size="21.5" fill="#3c3c3c" text-anchor="start" font-weight="bold" textLength="51.7" lengthAdjust="spacingAndGlyphs">Next</text></svg>
</body></html>
